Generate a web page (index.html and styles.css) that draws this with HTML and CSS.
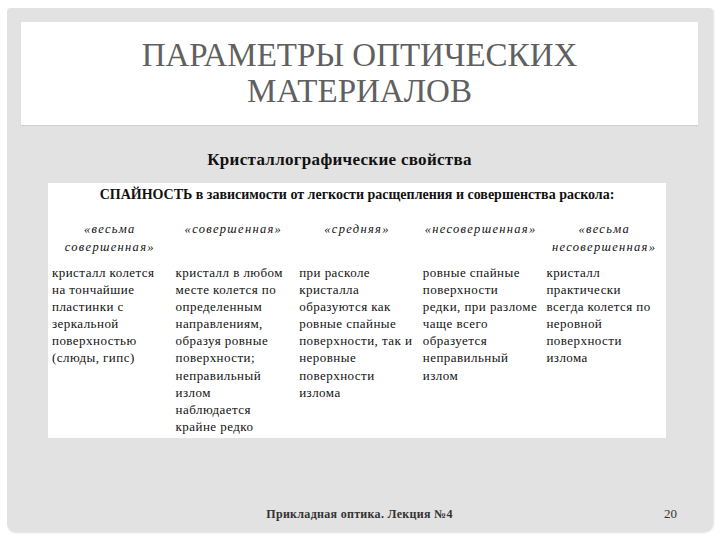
FILE: index.html
```html
<!DOCTYPE html>
<html lang="ru">
<head>
<meta charset="utf-8">
<title>Параметры оптических материалов</title>
<link rel="stylesheet" href="styles.css">
</head>
<body>
<div class="slide">
  <div class="title-box">
    <h1 class="title">ПАРАМЕТРЫ ОПТИЧЕСКИХ<br>МАТЕРИАЛОВ</h1>
  </div>
  <h2 class="subtitle">Кристаллографические свойства</h2>
  <div class="table">
    <div class="table-head">СПАЙНОСТЬ в зависимости от легкости расщепления и совершенства раскола:</div>
    <div class="grid kinds">
      <div class="kind">«весьма<br>совершенная»</div>
      <div class="kind">«совершенная»</div>
      <div class="kind">«средняя»</div>
      <div class="kind">«несовершенная»</div>
      <div class="kind">«весьма<br>несовершенная»</div>
    </div>
    <div class="grid descs">
      <div class="desc">кристалл колется<br>на тончайшие<br>пластинки с<br>зеркальной<br>поверхностью<br>(слюды, гипс)</div>
      <div class="desc">кристалл в любом<br>месте колется по<br>определенным<br>направлениям,<br>образуя ровные<br>поверхности;<br>неправильный<br>излом<br>наблюдается<br>крайне редко</div>
      <div class="desc">при расколе<br>кристалла<br>образуются как<br>ровные спайные<br>поверхности, так и<br>неровные<br>поверхности<br>излома</div>
      <div class="desc">ровные спайные<br>поверхности<br>редки, при разломе<br>чаще всего<br>образуется<br>неправильный<br>излом</div>
      <div class="desc">кристалл<br>практически<br>всегда колется по<br>неровной<br>поверхности<br>излома</div>
    </div>
  </div>
  <div class="footer">
    <span class="spacer"></span>
    <span class="footer-text">Прикладная оптика. Лекция №4</span>
    <span class="page-num">20</span>
  </div>
</div>
</body>
</html>
```

FILE: styles.css
```css
html, body {
  margin: 0;
  padding: 0;
  background: #ffffff;
}

body {
  width: 720px;
  height: 540px;
  overflow: hidden;
  font-family: "Liberation Serif", "Times New Roman", serif;
}

.slide {
  box-sizing: border-box;
  margin: 8px 0 0 7px;
  width: 706px;
  height: 524px;
  background: #e2e2e2;
  border-radius: 4px 4px 10px 8px;
  box-shadow: 1px 1px 2px rgba(0, 0, 0, 0.12);
  padding: 14px 15px 10px 14px;
  display: flex;
  flex-direction: column;
}

.title-box {
  background: #ffffff;
  height: 103px;
  box-sizing: border-box;
  padding-top: 15px;
  box-shadow: 0 1px 1px rgba(0, 0, 0, 0.08);
}

.title {
  margin: 0;
  font-weight: normal;
  font-size: 33px;
  line-height: 36px;
  color: #606060;
  text-align: center;
  letter-spacing: 0;
}

.subtitle {
  margin: 25px 0 0 0;
  padding-right: 40px;
  font-size: 17px;
  line-height: 20px;
  font-weight: bold;
  text-align: center;
  color: #111111;
  letter-spacing: 0.3px;
}

.table {
  margin: 13px 0 0 27px;
  width: 618px;
  background: #ffffff;
  padding: 3px 0 3px 0;
  color: #111111;
}

.table-head {
  font-size: 14px;
  line-height: 17px;
  font-weight: bold;
  text-align: center;
}

.grid {
  display: grid;
  grid-template-columns: repeat(5, 1fr);
}

.kinds {
  margin-top: 17px;
}

.kind {
  font-style: italic;
  font-size: 12.5px;
  line-height: 18px;
  letter-spacing: 1.3px;
  text-align: center;
  white-space: nowrap;
}

.descs {
  margin-top: 8px;
}

.desc {
  padding: 0 2px 0 4px;
  font-size: 13px;
  line-height: 17.1px;
  letter-spacing: 0.45px;
  white-space: nowrap;
}

.footer {
  margin-top: auto;
  display: grid;
  grid-template-columns: 1fr auto 1fr;
  align-items: baseline;
  line-height: 16px;
  color: #333333;
}

.footer-text {
  font-size: 12px;
  font-weight: bold;
  letter-spacing: 0.3px;
}

.page-num {
  justify-self: end;
  padding-right: 21px;
  font-size: 13px;
}
```
